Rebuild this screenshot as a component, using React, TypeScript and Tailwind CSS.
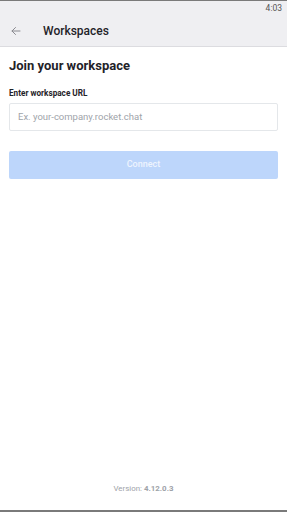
import React from "react";

const App: React.FC = () => {
  return (
    <div
      className="w-[287px] h-[512px] flex flex-col bg-white"
      style={{ fontFamily: "Roboto, 'Liberation Sans', sans-serif" }}
    >
      <div className="h-px bg-[#7a7a7a]" />
      <div className="bg-[#efeff2] border-b border-[#dcdce0]">
        <div className="h-[15px] flex items-center justify-end pr-[5px] text-[8.5px] text-[#555]">
          4:03
        </div>
        <div className="h-[30px] flex items-center">
          <svg
            className="ml-[10px] w-[12px] h-[12px] text-[#8a8a90]"
            viewBox="0 0 24 24"
            fill="none"
            stroke="currentColor"
            strokeWidth="2"
            strokeLinecap="round"
            strokeLinejoin="round"
          >
            <path d="M20 12H4" />
            <path d="M11 5l-7 7 7 7" />
          </svg>
          <span className="ml-[21px] text-[12px] font-medium text-[#1f2329]">
            Workspaces
          </span>
        </div>
      </div>
      <div className="flex-1 flex flex-col px-[9px]">
        <h1 className="mt-[10px] text-[13px] font-bold text-[#1f2329] leading-[18px]">
          Join your workspace
        </h1>
        <label className="mt-[13px] text-[8.2px] font-bold text-[#1f2329] leading-[10px]">
          Enter workspace URL
        </label>
        <div className="mt-[5px] h-[28px] border border-[#e4e7ea] rounded-[2px] flex items-center px-[8px] text-[9.5px] text-[#a0a4aa]">
          Ex. your-company.rocket.chat
        </div>
        <button className="mt-[20px] h-[28px] rounded-[2px] bg-[#bdd6fb] text-[#eef4fe] text-[9px] font-medium">
          Connect
        </button>
        <div className="mt-auto mb-[15px] text-center text-[7.9px] text-[#9ea2a8]">
          Version: <span className="font-bold">4.12.0.3</span>
        </div>
      </div>
      <div className="h-[2px] bg-[#7a7a7a]" />
    </div>
  );
};

export default App;
